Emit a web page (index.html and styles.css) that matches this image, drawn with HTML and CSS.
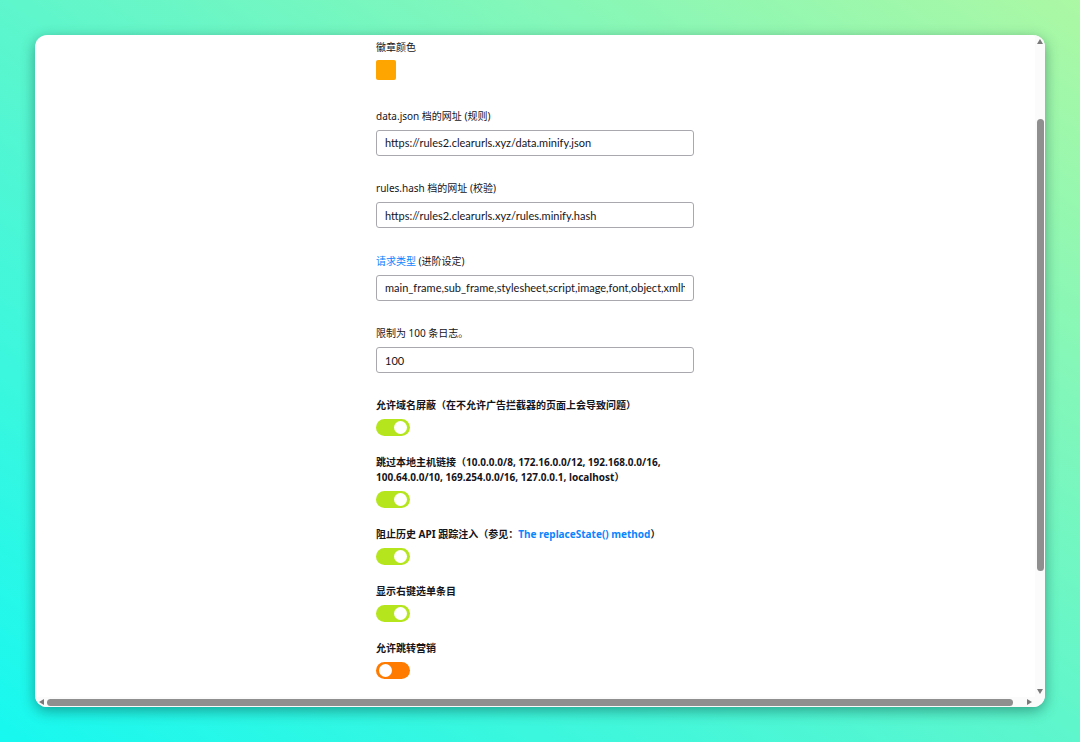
FILE: index.html
```html
<!DOCTYPE html>
<html lang="zh-CN">
<head>
    <meta charset="UTF-8">
    <meta name="viewport" content="width=device-width, initial-scale=1.0">
    <title>ClearURLs 设置</title>
    <link rel="stylesheet" href="styles.css">
</head>
<body>
    <div class="window">
        <div class="content">
            <div class="settings">
                <!-- 徽章颜色 -->
                <div class="field">
                    <label class="label">徽章颜色</label>
                    <div class="swatch"></div>
                </div>

                <div class="field">
                    <label class="label">data.json 档的网址 (规则)</label>
                    <input class="text-input" type="text" value="https://rules2.clearurls.xyz/data.minify.json">
                </div>

                <div class="field">
                    <label class="label">rules.hash 档的网址 (校验)</label>
                    <input class="text-input" type="text" value="https://rules2.clearurls.xyz/rules.minify.hash">
                </div>

                <div class="field">
                    <label class="label"><a href="#">请求类型</a> (进阶设定)</label>
                    <input class="text-input" type="text" value="main_frame,sub_frame,stylesheet,script,image,font,object,xmlhttprequest,ping,csp_report,media,websocket,other">
                </div>

                <div class="field">
                    <label class="label">限制为 100 条日志。</label>
                    <input class="text-input" type="text" value="100">
                </div>

                <!-- 开关 -->
                <div class="switch-row">
                    <div class="switch-label">允许域名屏蔽（在不允许广告拦截器的页面上会导致问题）</div>
                    <span class="switch on"></span>
                </div>

                <div class="switch-row">
                    <div class="switch-label">跳过本地主机链接（10.0.0.0/8, 172.16.0.0/12, 192.168.0.0/16, 100.64.0.0/10, 169.254.0.0/16, 127.0.0.1, localhost）</div>
                    <span class="switch on"></span>
                </div>

                <div class="switch-row">
                    <div class="switch-label">阻止历史 API 跟踪注入（参见：<a href="#">The replaceState() method</a>）</div>
                    <span class="switch on"></span>
                </div>

                <div class="switch-row">
                    <div class="switch-label">显示右键选单条目</div>
                    <span class="switch on"></span>
                </div>

                <div class="switch-row">
                    <div class="switch-label">允许跳转营销</div>
                    <span class="switch off"></span>
                </div>
            </div>
        </div>

        <!-- 滚动条 -->
        <div class="vscroll">
            <span class="arrow up"></span>
            <div class="vtrack"><div class="vthumb"></div></div>
            <span class="arrow down"></span>
        </div>
        <div class="hscroll">
            <span class="arrow left"></span>
            <div class="htrack"><div class="hthumb"></div></div>
            <span class="arrow right"></span>
        </div>
        <div class="corner"></div>
    </div>
</body>
</html>
```

FILE: styles.css
```css
html, body {
    height: 100%;
}

body {
    margin: 0;
    padding: 35px;
    box-sizing: border-box;
    background: linear-gradient(to top right, #17f8f0 0%, #5ef6cc 50%, #acf8a4 100%);
    font-family: "Noto Sans", "Noto Sans CJK SC", sans-serif;
    color: #15141a;
}

.window {
    width: 1010px;
    height: 672px;
    background-color: #fff;
    border-radius: 12px;
    box-shadow: 0 4px 14px rgba(0, 60, 50, 0.45);
    overflow: hidden;
    display: grid;
    grid-template-columns: 1fr 10px;
    grid-template-rows: 1fr 10px;
}

.content {
    overflow: hidden;
}

.settings {
    width: 318px;
    margin: 0 auto;
    padding-top: 4px;
}

.field {
    margin-bottom: 24.5px;
}

.field:first-child {
    margin-bottom: 27.5px;
}

.label {
    display: block;
    font-size: 10px;
    line-height: 16px;
    margin-bottom: 6px;
}

.field:first-child .label {
    margin-bottom: 5px;
}

.label a,
.switch-label a {
    color: #0a84ff;
    text-decoration: none;
}

.swatch {
    width: 20px;
    height: 20px;
    background-color: #ffa500;
    border-radius: 2px;
}

.text-input {
    display: block;
    width: 318px;
    height: 26px;
    box-sizing: border-box;
    border: 1px solid #a8a8ae;
    border-radius: 3px;
    padding: 0 8px;
    font-family: Lato, "Noto Sans CJK SC", sans-serif;
    font-size: 11px;
    color: #15141a;
    background: #fff;
}

.switch-row {
    margin-bottom: 19px;
}

.field + .switch-row {
    margin-top: 4px;
}

.switch-label {
    font-size: 10px;
    font-weight: bold;
    line-height: 15px;
    margin-bottom: 6px;
}

.switch {
    display: block;
    width: 34px;
    height: 17px;
    border-radius: 8.5px;
    position: relative;
}

.switch::after {
    content: "";
    position: absolute;
    top: 2px;
    width: 13px;
    height: 13px;
    border-radius: 50%;
    background: #fff;
}

.switch.on {
    background-color: #b5e61d;
}

.switch.on::after {
    right: 3px;
}

.switch.off {
    background-color: #ff7b00;
}

.switch.off::after {
    left: 3px;
}

/* 滚动条 */
.vscroll {
    background: #fbfbfb;
    display: flex;
    flex-direction: column;
    align-items: center;
}

.vtrack {
    flex: 1;
    width: 100%;
    display: flex;
    flex-direction: column;
    align-items: center;
}

.vthumb {
    width: 7px;
    height: 452px;
    margin-top: 75px;
    background: #8f8f8f;
    border-radius: 4px;
}

.hscroll {
    background: #fbfbfb;
    display: flex;
    align-items: center;
}

.htrack {
    flex: 1;
    display: flex;
    align-items: center;
}

.hthumb {
    width: 966px;
    height: 7px;
    margin-left: 3px;
    background: #8f8f8f;
    border-radius: 4px;
}

.corner {
    background: #fbfbfb;
}

.arrow {
    width: 0;
    height: 0;
    border: 3.5px solid transparent;
    flex: none;
}

.arrow.up {
    border-bottom: 5px solid #7a7a7a;
    border-top: 0;
    margin-top: 4px;
}

.arrow.down {
    border-top: 5px solid #7a7a7a;
    border-bottom: 0;
    margin-bottom: 3px;
}

.arrow.left {
    border-right: 5px solid #7a7a7a;
    border-left: 0;
    margin-left: 4px;
}

.arrow.right {
    border-left: 5px solid #7a7a7a;
    border-right: 0;
    margin-right: 3px;
}
```
